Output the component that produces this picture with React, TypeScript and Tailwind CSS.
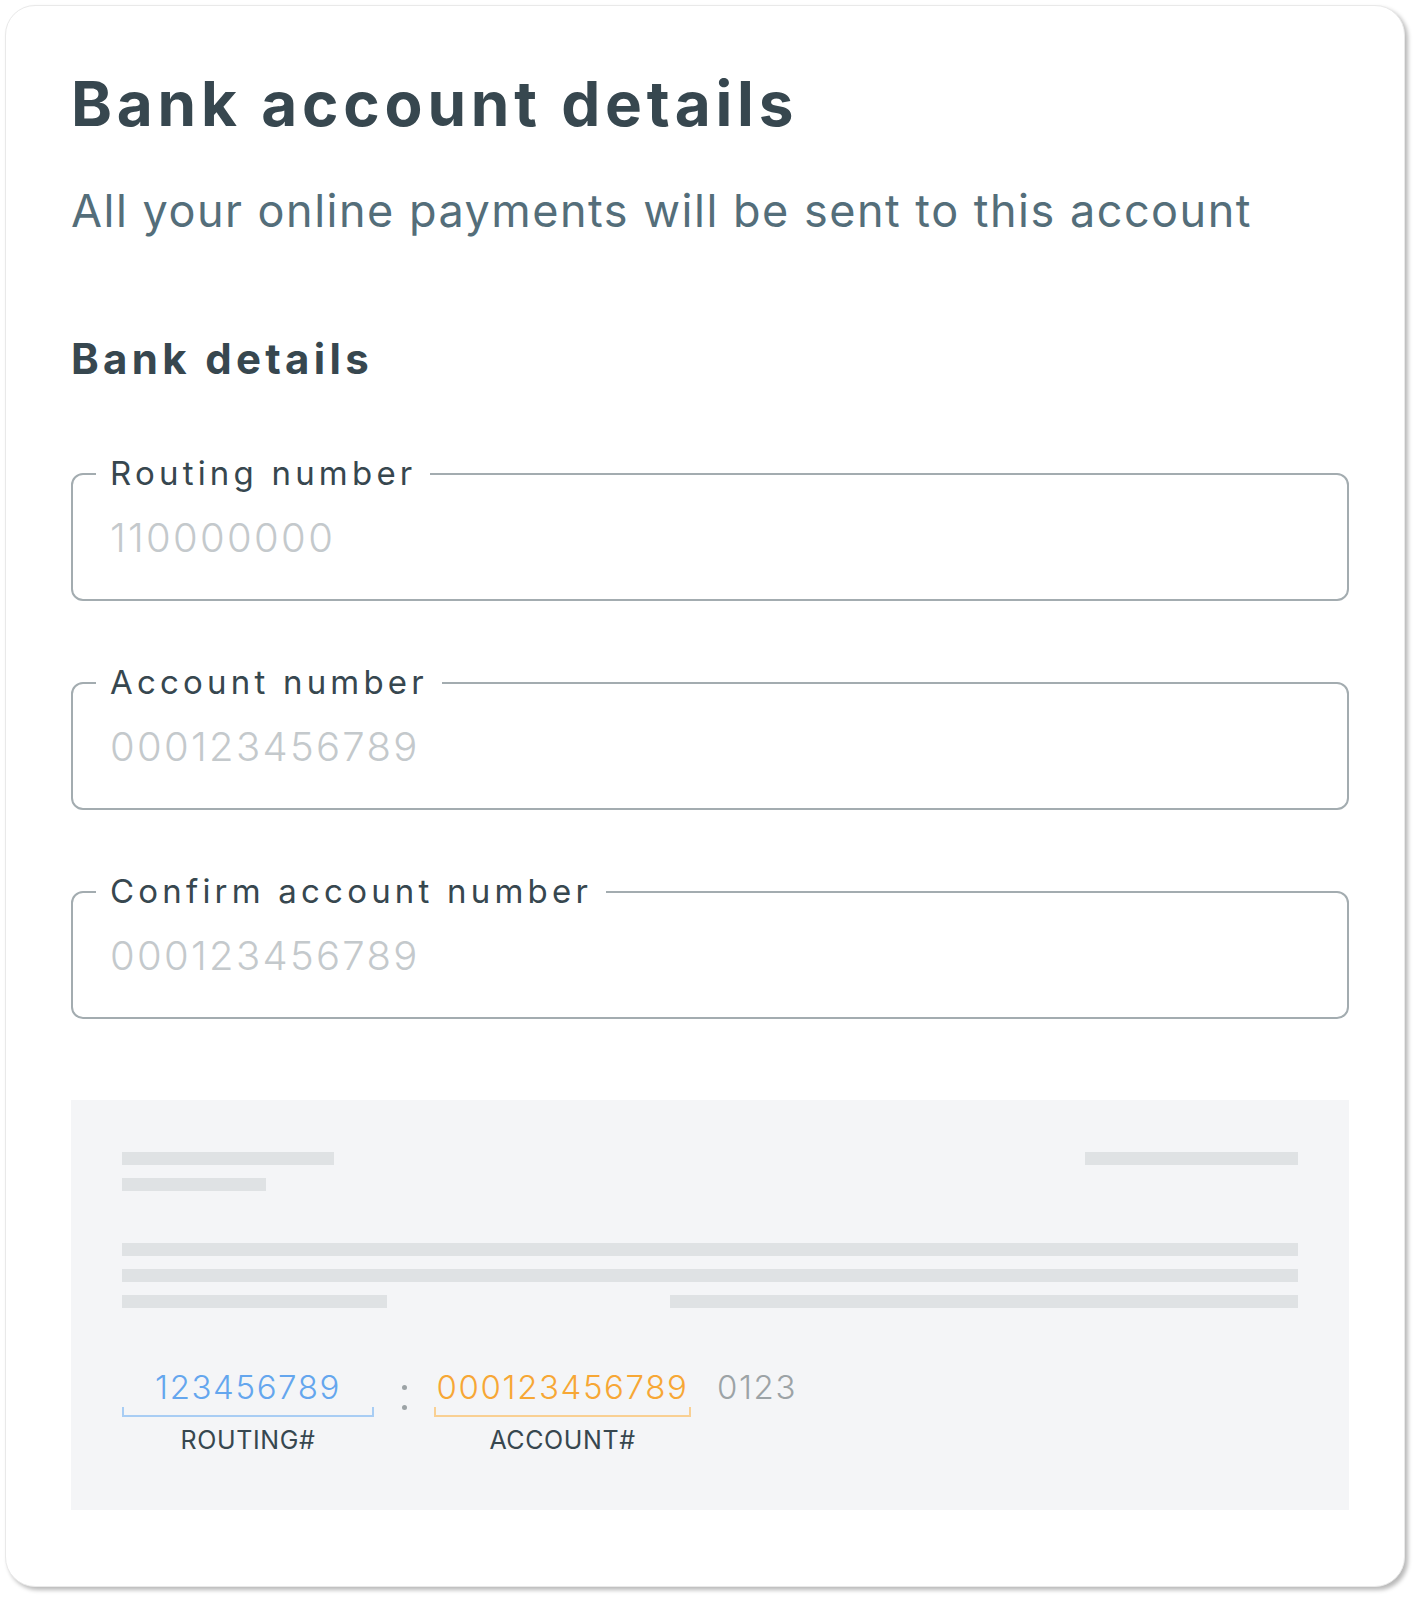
import type { ReactNode } from "react";

const font = { fontFamily: "Inter, 'Noto Sans', sans-serif" };

function Field({ label, placeholder }: { label: string; placeholder: string }) {
  return (
    <fieldset className="rounded-[12px] border-2 border-[#a3acb0] px-[23px] pb-[42px]">
      <legend className="px-[14px] text-[33px] leading-[33px] tracking-[4.2px] text-[#37474f]">
        {label}
      </legend>
      <input
        className="mt-[27px] block h-[40px] w-full bg-transparent pl-[14px] text-[40px] font-light leading-[40px] tracking-[2.3px] text-[#37474f] outline-none placeholder:text-[#c4c9cc]"
        placeholder={placeholder}
      />
    </fieldset>
  );
}

function Bar({ className }: { className: string }) {
  return <div className={`h-[13px] bg-[#dfe2e4] ${className}`} />;
}

function MicrGroup({
  value,
  caption,
  width,
  text,
  bracket,
}: {
  value: string;
  caption: string;
  width: string;
  text: string;
  bracket: string;
}) {
  return (
    <div className={`flex flex-col items-center ${width}`}>
      <span className={`text-[33px] font-light leading-[33px] tracking-[1.6px] ${text}`}>{value}</span>
      <div className={`mt-[2.5px] h-[10px] w-full border-2 border-t-0 ${bracket}`} />
      <span className="mt-[11px] text-[25px] leading-[25px] tracking-[0.6px] text-[#37474f]">
        {caption}
      </span>
    </div>
  );
}

function Section({ children }: { children: ReactNode }) {
  return <div className="flex flex-col gap-[65px]">{children}</div>;
}

export default function App() {
  return (
    <div className="min-h-[1600px] bg-white p-[5px]" style={font}>
      <div className="h-[1582px] w-[1400px] rounded-[30px] border border-[#e9e9e9] bg-white pl-[65px] pt-[67px] shadow-[3px_3px_4px_rgba(0,0,0,0.28)]">
        <div className="w-[1278px]">
          <h1 className="text-[62px] font-bold leading-[62px] tracking-[4.8px] text-[#37474f]">
            Bank account details
          </h1>
          <p className="mt-[53px] text-[45px] leading-[45px] tracking-[1.5px] text-[#546e7a]">
            All your online payments will be sent to this account
          </p>
          <h2 className="mt-[105px] text-[42px] font-bold leading-[42px] tracking-[4.3px] text-[#37474f]">
            Bank details
          </h2>

          <div className="mt-[77px]">
            <Section>
              <Field label="Routing number" placeholder="110000000" />
              <Field label="Account number" placeholder="000123456789" />
              <Field label="Confirm account number" placeholder="000123456789" />
            </Section>
          </div>

          <div className="mt-[81px] h-[410px] bg-[#f4f5f7] px-[51px] pt-[52px]">
            <div className="flex justify-between">
              <div className="flex flex-col gap-[13px]">
                <Bar className="w-[212px]" />
                <Bar className="w-[144px]" />
              </div>
              <Bar className="w-[213px]" />
            </div>
            <div className="mt-[52px] flex flex-col gap-[13px]">
              <Bar className="w-full" />
              <Bar className="w-full" />
              <div className="flex justify-between">
                <Bar className="w-[265px]" />
                <Bar className="w-[628px]" />
              </div>
            </div>

            <div className="mt-[63px] flex items-start">
              <MicrGroup
                value="123456789"
                caption="ROUTING#"
                width="w-[252px]"
                text="text-[#64a6ee]"
                bracket="border-[#a8cdf4]"
              />
              <div className="flex w-[60px] flex-col items-center gap-[15px] pt-[14px]">
                <span className="h-[5px] w-[5px] rounded-full bg-[#9ca3a6]" />
                <span className="h-[5px] w-[5px] rounded-full bg-[#9ca3a6]" />
              </div>
              <MicrGroup
                value="000123456789"
                caption="ACCOUNT#"
                width="w-[257px]"
                text="text-[#f7a735]"
                bracket="border-[#f9d093]"
              />
              <span className="ml-[26px] text-[33px] font-light leading-[33px] tracking-[1.6px] text-[#9ca3a6]">
                0123
              </span>
            </div>
          </div>
        </div>
      </div>
    </div>
  );
}
